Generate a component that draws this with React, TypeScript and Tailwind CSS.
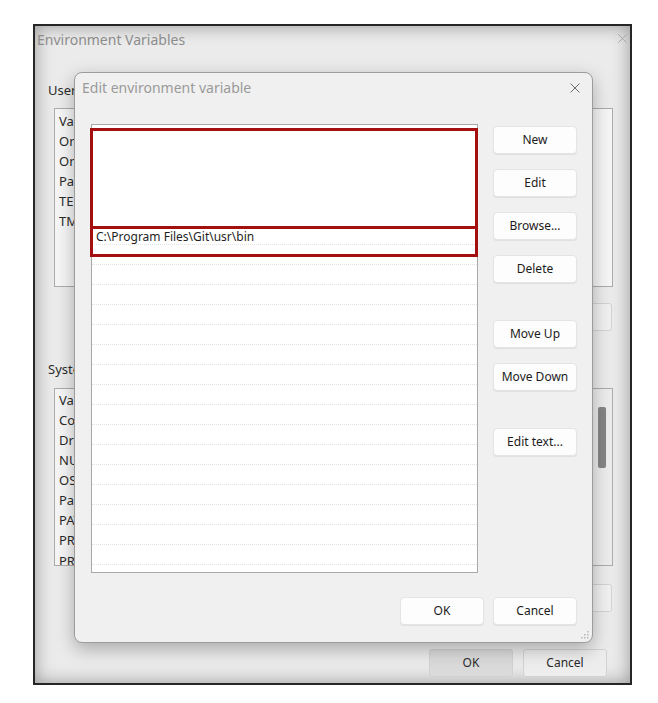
import React from 'react';

const Btn = ({ label, className = '' }: { label: string; className?: string }) => (
  <div
    className={`h-[28px] w-[84px] flex items-center justify-center rounded-[4px] border border-[#e4e4e4] bg-[#fdfdfd] text-[12px] text-[#1b1b1b] shadow-[0_1px_1px_rgba(0,0,0,0.07)] ${className}`}
  >
    {label}
  </div>
);

const OldBtn = ({ label, className = '' }: { label: string; className?: string }) => (
  <div
    className={`h-[28px] w-[84px] flex items-center justify-center rounded-[3px] border border-[#d2d2d2] text-[12px] text-[#2a2a2a] ${className}`}
  >
    {label}
  </div>
);

const CloseX = ({ size, color }: { size: number; color: string }) => (
  <svg width={size} height={size} viewBox="0 0 10 10" fill="none">
    <path d="M0.5 0.5L9.5 9.5M9.5 0.5L0.5 9.5" stroke={color} strokeWidth="1" />
  </svg>
);

const userVars = ['Variable', 'OneDrive', 'OneDriveConsumer', 'Path', 'TEMP', 'TMP'];
const systemVars = [
  'Variable',
  'ComSpec',
  'DriverData',
  'NUMBER_OF_PROCESSORS',
  'OS',
  'Path',
  'PATHEXT',
  'PROCESSOR_ARCHITECTURE',
];

export default function App() {
  return (
    <div className="relative w-[658px] h-[703px] bg-white pt-[24px] pl-[33px] font-['Noto_Sans',sans-serif]">
      {/* Environment Variables window (dimmed, behind) */}
      <div className="w-[599px] h-[661px] border-2 border-[#262626] bg-[#ebebeb] shadow-[inset_0_0_18px_rgba(0,0,0,0.36)] flex flex-col">
        <div className="h-[28px] flex items-center justify-between pl-[2px] pr-[3px]">
          <span className="text-[14px] text-[#8c8c8c] leading-[18px]">Environment Variables</span>
          <div className="-mt-[4px]">
            <CloseX size={9} color="#a3a3a3" />
          </div>
        </div>

        <div className="mt-[27px] pl-[13px] text-[13px] leading-[18px] text-[#2b2b2b]">User</div>
        <div className="mt-[9px] ml-[19px] w-[559px] h-[179px] border border-[#ababab] bg-[#f5f5f5] pt-[3px] pl-[4px]">
          {userVars.map((v) => (
            <div key={v} className="h-[20px] flex items-center text-[13px] text-[#2b2b2b]">
              {v}
            </div>
          ))}
        </div>
        <div className="mt-[16px] pr-[18px] flex justify-end gap-[10px]">
          <OldBtn label="New..." className="bg-[#f0f0f0] h-[27px] w-[84px]" />
          <OldBtn label="Edit..." className="bg-[#f0f0f0] h-[27px] w-[84px]" />
          <OldBtn label="" className="bg-[#f0f0f0] h-[27px] w-[19px]" />
        </div>

        <div className="mt-[29px] pl-[13px] text-[13px] leading-[18px] text-[#2b2b2b]">System</div>
        <div className="mt-[10px] ml-[19px] w-[559px] h-[178px] border border-[#ababab] bg-[#f5f5f5] flex overflow-hidden">
          <div className="flex-1 pt-[2px] pl-[4px]">
            {systemVars.map((v) => (
              <div key={v} className="h-[20px] flex items-center text-[13px] text-[#2b2b2b]">
                {v}
              </div>
            ))}
            <div className="h-[14px] overflow-hidden text-[13px] leading-[20px] text-[#2b2b2b]">
              PROCESSOR_IDENTIFIER
            </div>
          </div>
          <div className="w-[19px] bg-[#ececec] pt-[18px] pl-[5px]">
            <div className="w-[8px] h-[61px] rounded-[2px] bg-[#858585]" />
          </div>
        </div>
        <div className="mt-[18px] pr-[18px] flex justify-end gap-[10px]">
          <OldBtn label="New..." className="bg-[#f0f0f0] h-[27px]" />
          <OldBtn label="Edit..." className="bg-[#f0f0f0] h-[27px]" />
          <OldBtn label="" className="bg-[#f0f0f0] h-[27px] w-[19px]" />
        </div>

        <div className="mt-[37px] pr-[23px] flex justify-end gap-[10px]">
          <OldBtn label="OK" className="bg-[#dadada] w-[83px]" />
          <OldBtn label="Cancel" className="bg-[#ededed]" />
        </div>
      </div>

      {/* Edit environment variable dialog */}
      <div className="absolute left-[74px] top-[72px] w-[519px] h-[571px] rounded-[8px] border border-[#9c9c9c] bg-[#f0f0f0] shadow-[0_6px_18px_rgba(0,0,0,0.28)] flex flex-col">
        <div className="h-[51px] flex items-start justify-between pl-[7px] pr-[12px] pt-[6px]">
          <span className="text-[14px] leading-[18px] text-[#9a9a9a]">Edit environment variable</span>
          <div className="mt-[4px]">
            <CloseX size={10} color="#6e6e6e" />
          </div>
        </div>

        <div className="flex pl-[16px] gap-[15px]">
          <div className="relative">
            <div className="w-[387px] h-[449px] border border-[#a9a9a9] bg-white overflow-hidden">
              <div className="h-[100px]" />
              <div className="h-[20px] flex items-center pt-[4px] pl-[4px] border-b border-dotted border-[#e2e2e2] text-[12px] text-[#1f1f1f]">
                C:\Program Files\Git\usr\bin
              </div>
              {Array.from({ length: 17 }).map((_, i) => (
                <div key={i} className="h-[20px] border-b border-dotted border-[#e0e0e0]" />
              ))}
            </div>
            <div className="absolute left-[-1px] top-[4px] w-[388px] h-[101px] border-[3px] border-[#a40f0f]" />
            <div className="absolute left-[-1px] top-[102px] w-[388px] h-[31px] border-[3px] border-[#a40f0f]" />
          </div>

          <div className="flex flex-col pt-[2px]">
            <Btn label="New" />
            <Btn label="Edit" className="mt-[15px]" />
            <Btn label="Browse..." className="mt-[15px]" />
            <Btn label="Delete" className="mt-[15px]" />
            <Btn label="Move Up" className="mt-[37px]" />
            <Btn label="Move Down" className="mt-[15px]" />
            <Btn label="Edit text..." className="mt-[37px]" />
          </div>
        </div>

        <div className="mt-[24px] pr-[15px] flex justify-end gap-[9px]">
          <Btn label="OK" className="h-[27px]" />
          <Btn label="Cancel" className="h-[27px]" />
        </div>

        <div className="absolute right-[3px] bottom-[3px]">
          <svg width="8" height="8" viewBox="0 0 8 8">
            <rect x="6" y="0" width="1.5" height="1.5" fill="#b5b5b5" />
            <rect x="3" y="3" width="1.5" height="1.5" fill="#b5b5b5" />
            <rect x="6" y="3" width="1.5" height="1.5" fill="#b5b5b5" />
            <rect x="0" y="6" width="1.5" height="1.5" fill="#b5b5b5" />
            <rect x="3" y="6" width="1.5" height="1.5" fill="#b5b5b5" />
            <rect x="6" y="6" width="1.5" height="1.5" fill="#b5b5b5" />
          </svg>
        </div>
      </div>
    </div>
  );
}
